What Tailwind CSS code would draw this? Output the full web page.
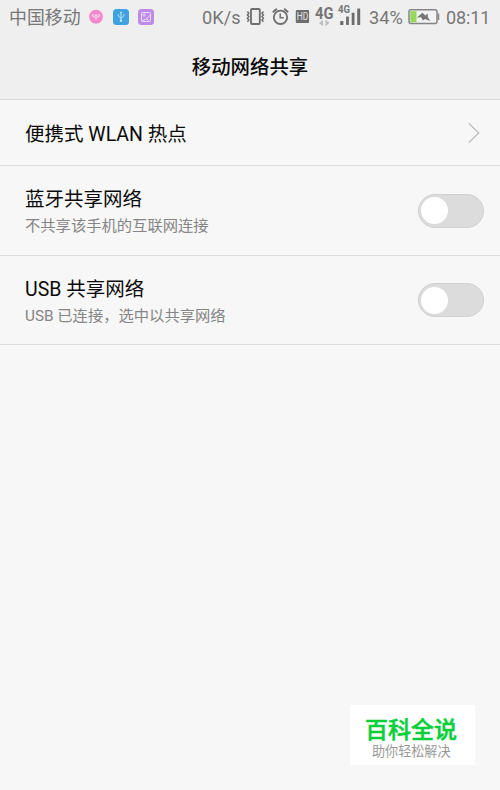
<!DOCTYPE html>
<html lang="zh-CN">
<head>
<meta charset="utf-8">
<title>移动网络共享</title>
<script src="https://cdn.jsdelivr.net/npm/@tailwindcss/browser@4"></script>
</head>
<body class="relative flex h-[790px] w-[500px] flex-col overflow-hidden bg-[#f7f7f7] font-[Roboto,'Noto_Sans_CJK_SC',sans-serif] text-[#0a0a0a]">
<header class="h-[100px] shrink-0 border-b border-[#d9d9d9] bg-[#efefef]">
  <div class="flex h-[34px] items-center pl-[9px] text-[18px] leading-[34px] whitespace-nowrap text-[#777]">
    <span class="w-[79px] shrink-0 pt-px text-[17.9px]">中国移动</span>
    <svg class="mr-[9px] h-[34px] w-4 shrink-0" viewBox="0 0 16 34"><circle cx="8" cy="16.7" r="7" fill="#f48acb"/><g fill="none" stroke="#fff" stroke-opacity=".65" stroke-width="1.3"><path d="M4.8 14c-.4 1.8.4 3 2 3.4M11.2 14c.4 1.8-.4 3-2 3.4"/><path d="M6.8 14.6 8 16l1.2-1.4M8 16v3.8"/></g></svg>
    <svg class="mr-[9px] h-[34px] w-4 shrink-0" viewBox="0 0 16 34"><rect y="9" width="16" height="16" rx="3.5" fill="#3da2df"/><g fill="none" stroke="#c9e7fa" stroke-width=".9"><path d="M8 12v9M5.2 14.2v1.9L8 18.2l2.8-2.1v-1.9"/></g><path d="M6.6 13.2 8 11.2l1.4 2z" fill="#c9e7fa"/><circle cx="8" cy="20.7" r="1.2" fill="#c9e7fa"/></svg>
    <svg class="mr-12 h-[34px] w-4 shrink-0" viewBox="0 0 16 34"><rect y="9" width="16" height="16" rx="3.5" fill="#bc8ce8"/><g fill="none" stroke="#ead9fa"><rect x="3.5" y="12.5" width="9" height="9" rx=".8"/><circle cx="6" cy="15" r="1.1"/><path d="M3.5 20.5c3-.2 6-1.8 8.5-5.3M8 18.5l3.2 2.3"/></g></svg>
    <span class="w-[44px] shrink-0 pt-[2px] text-[18.2px]">0K/s</span>
    <svg class="mr-[6px] h-[34px] w-5 shrink-0" viewBox="0 0 20 34" fill="none" stroke="#6d6d6d"><rect x="5" y="9" width="8.8" height="15" rx="1" stroke-width="1.8"/><path d="m1.4 11.5 1.4 1.7-1.4 1.7 1.4 1.7-1.4 1.7 1.4 1.7-1.4 1.7M17.4 11.5 16 13.2l1.4 1.7-1.4 1.7 1.4 1.7-1.4 1.7 1.4 1.7" stroke-width="1.5"/></svg>
    <svg class="mr-[6px] h-[34px] w-[18px] shrink-0" viewBox="0 0 18 34" fill="none" stroke="#6d6d6d"><circle cx="8.5" cy="17.3" r="6.7" stroke-width="1.8"/><path d="M.8 12.2 4.8 8.7M16.2 12.2l-4-3.5" stroke-width="1.8"/><path d="M8.2 13.5v4.3h3.6" stroke-width="1.5"/></svg>
    <svg class="mr-[5px] h-[34px] w-[14px] shrink-0 overflow-visible" viewBox="0 0 14 34"><rect x="-.2" y="10" width="13.3" height="13" rx="1" fill="#6d6d6d"/><text x=".7" y="20.2" font-family="Roboto" font-size="10.2" textLength="11.6" lengthAdjust="spacingAndGlyphs" fill="#e2e2e2">HD</text></svg>
    <svg class="mr-[3px] h-[34px] w-5 shrink-0 overflow-visible" viewBox="0 0 20 34"><text x="0" y="18.5" font-family="Roboto" font-size="17" font-weight="700" textLength="18.5" lengthAdjust="spacingAndGlyphs" fill="#757575">4G</text><path d="M4 23l4-3.3v6.6zM14.5 23l-4-3.3v6.6z" fill="#bebebe"/></svg>
    <svg class="mr-[7px] h-[34px] w-6 shrink-0 overflow-visible" viewBox="0 0 24 34"><text x="0" y="12.5" font-family="Roboto" font-size="10" font-weight="700" textLength="12" lengthAdjust="spacingAndGlyphs" fill="#757575">4G</text><g fill="#6d6d6d"><rect x="2.2" y="21" width="3.2" height="4" rx=".5"/><rect x="8.1" y="16.6" width="2.8" height="8.4" rx=".5"/><rect x="13.7" y="12.7" width="2.8" height="12.3" rx=".5"/><rect x="19.2" y="8.5" width="3" height="16.5" rx=".5"/></g></svg>
    <span class="w-[39px] shrink-0 pt-[2px] text-[18.2px]">34%</span>
    <svg class="mr-[6px] h-[34px] w-8 shrink-0" viewBox="0 0 32 34"><rect x="1" y="9.8" width="28" height="13.8" rx="2" fill="#f2f2f2" stroke="#858585" stroke-width="1.5"/><path d="M30.5 13.5v6.5" stroke="#858585" stroke-width="1.5"/><path d="M2.3 11.2h6.2v11H2.3z" fill="#94d957"/><path d="m8.8 17.6 5.7-4.8 2.7 2.8 2.6-2-.1 3.4 2.6 3.9-5.4-1.8-1.9 1.5-2-3.4z" fill="#757575"/></svg>
    <span class="shrink-0 pt-[2px] text-[18px] tracking-[-.1px]">08:11</span>
  </div>
  <h1 class="h-[65px] pt-[3px] text-center text-[19.4px] leading-[62px] font-medium">移动网络共享</h1>
</header>
<main>
  <div class="flex h-[66px] items-center justify-between border-b border-[#dcdcdc] pr-5 pl-[25px]">
    <span class="pt-[4px] text-[19.5px] leading-7">便携式 WLAN 热点</span>
    <svg class="h-5 w-3" viewBox="0 0 12 20" fill="none" stroke="#b8b8b8" stroke-width="1.2"><path d="m.8.4 10 9.6-10 9.6"/></svg>
  </div>
  <div class="flex h-[90px] items-center justify-between border-b border-[#dcdcdc] pr-4 pl-[25px]">
    <div class="pt-[3px]">
      <div class="text-[19.5px] leading-7">蓝牙共享网络</div>
      <div class="text-[15.3px] leading-6 text-[#858585]">不共享该手机的互联网连接</div>
    </div>
    <div class="flex h-[34px] w-[66px] items-center rounded-full border border-[#d0d0d0] bg-[#dcdcdc] pl-[2px]"><div class="size-[27px] rounded-full bg-white"></div></div>
  </div>
  <div class="flex h-[89px] items-center justify-between border-b border-[#dcdcdc] pr-4 pl-[25px]">
    <div class="pt-[3px]">
      <div class="text-[19.5px] leading-7">USB 共享网络</div>
      <div class="text-[15.3px] leading-6 text-[#858585]">USB 已连接，选中以共享网络</div>
    </div>
    <div class="flex h-[34px] w-[66px] items-center rounded-full border border-[#d0d0d0] bg-[#dcdcdc] pl-[2px]"><div class="size-[27px] rounded-full bg-white"></div></div>
  </div>
</main>
<aside class="absolute top-[705px] left-[350px] h-[60px] w-[125px] bg-white pt-[10px] whitespace-nowrap">
  <div class="pl-[15px] text-[23px] leading-8 font-medium text-[#07cf3a] [-webkit-text-stroke:.5px_#07cf3a]">百科全说</div>
  <div class="pl-[22px] text-[13.1px] leading-[9px] text-[#999]">助你轻松解决</div>
</aside>
</body>
</html>
